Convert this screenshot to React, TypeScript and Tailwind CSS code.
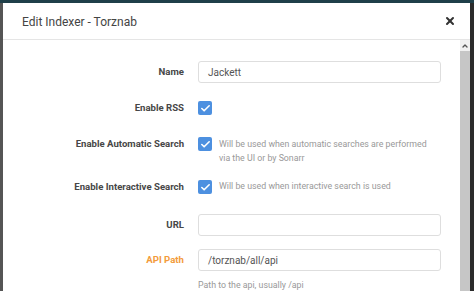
import { Check, ChevronUp, X } from "lucide-react";

const font = { fontFamily: "Roboto, 'Open Sans', sans-serif" };

function Checkbox() {
	return (
		<span className="flex h-[14px] w-[14px] shrink-0 items-center justify-center rounded-[2px] bg-[#4d90e0]">
			<Check className="h-[11px] w-[11px] text-white" strokeWidth={3.5} />
		</span>
	);
}

function Label({ children, warn }: { children: string; warn?: boolean }) {
	return (
		<div
			className={`w-[181px] shrink-0 text-right text-[9.6px] font-bold leading-[22px] ${
				warn ? "text-[#f39b3b]" : "text-[#474747]"
			}`}
		>
			{children}
		</div>
	);
}

function TextInput({ value }: { value: string }) {
	return (
		<div className="flex h-[22px] w-[243px] items-center rounded-[3px] border border-[#dedede] bg-white pl-[9px] text-[10px] text-[#555]">
			{value}
		</div>
	);
}

export default function App() {
	return (
		<div
			className="flex h-[291px] w-[474px] flex-col overflow-hidden bg-[#1f3f49]"
			style={font}
		>
			<div className="h-[3px] shrink-0" />
			<div className="flex min-h-0 flex-1">
				<div className="w-[3px] shrink-0 bg-[#555]" />
				<div className="flex w-[467px] flex-col bg-white">
					<div className="flex h-[37px] shrink-0 items-center justify-between border-b border-[#e5e5e5] pl-[19px] pr-[14px]">
						<span className="mt-[1px] text-[12px] text-[#444]">Edit Indexer - Torznab</span>
						<X className="h-[12px] w-[12px] text-[#333]" strokeWidth={4} />
					</div>
					<div className="flex min-h-0 flex-1">
						<div className="flex flex-1 flex-col pt-[21px]">
							<div className="flex gap-[14px]">
								<Label>Name</Label>
								<TextInput value="Jackett" />
							</div>
							<div className="mt-[14px] flex gap-[14px]">
								<Label>Enable RSS</Label>
								<div className="flex h-[22px] items-center">
									<Checkbox />
								</div>
							</div>
							<div className="mt-[14px] flex gap-[14px]">
								<Label>Enable Automatic Search</Label>
								<div className="flex items-start gap-[7px] pt-[4px]">
									<Checkbox />
									<div className="text-[8.8px] leading-[14px] text-[#999]">
										Will be used when automatic searches are performed
										<br />
										via the UI or by Sonarr
									</div>
								</div>
							</div>
							<div className="mt-[11px] flex gap-[14px]">
								<Label>Enable Interactive Search</Label>
								<div className="flex h-[22px] items-center gap-[7px]">
									<Checkbox />
									<span className="text-[8.8px] text-[#999]">
										Will be used when interactive search is used
									</span>
								</div>
							</div>
							<div className="mt-[16px] flex gap-[14px]">
								<Label>URL</Label>
								<TextInput value="" />
							</div>
							<div className="mt-[13px] flex gap-[14px]">
								<Label warn>API Path</Label>
								<div className="flex flex-col">
									<TextInput value="/torznab/all/api" />
									<span className="mt-[8px] text-[8.8px] text-[#999]">
										Path to the api, usually /api
									</span>
								</div>
							</div>
						</div>
						<div className="flex w-[10px] shrink-0 flex-col bg-[#f1f1f1]">
							<div className="flex h-[11px] items-center justify-center">
								<ChevronUp className="h-[8px] w-[8px] text-[#555]" strokeWidth={4} />
							</div>
							<div className="flex-1 bg-[#c6c6c6]" />
						</div>
					</div>
				</div>
				<div className="flex-1 bg-[#2b2b2b]" />
			</div>
		</div>
	);
}
